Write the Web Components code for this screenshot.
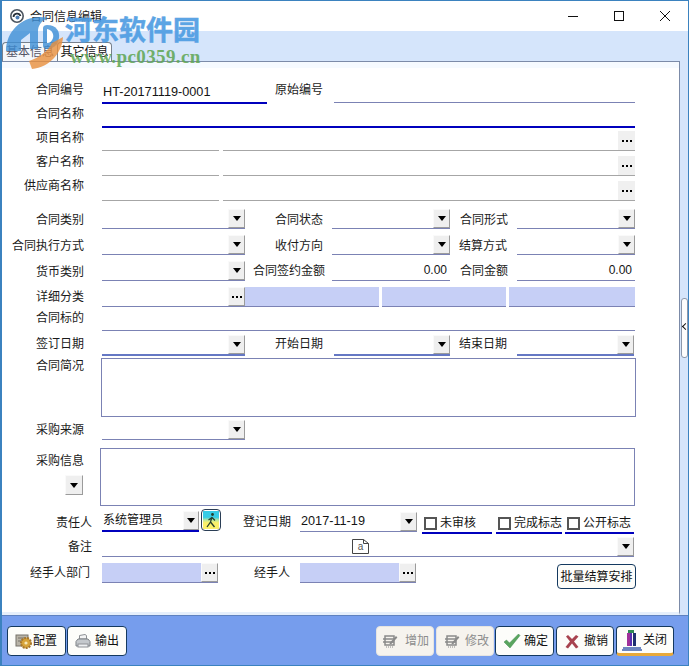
<!DOCTYPE html>
<html lang="zh">
<head>
<meta charset="utf-8">
<title>合同信息编辑</title>
<style>
  html, body { margin: 0; height: 666px; overflow: hidden; background: #fff; }
  body { font: 12px/16px "Liberation Sans", "Noto Sans CJK SC", sans-serif; color: #141414; }
  .stack { display: flex; flex-direction: column; align-items: flex-end; width: 81px; height: 58px; }
</style>
</head>
<body>
<erp-window>
  <erp-titlebar slot="title" heading="合同信息编辑"></erp-titlebar>
  <erp-tabs slot="tabs"></erp-tabs>

  <form-row h="42">
    <f-label w="81" lb="6">合同编号</f-label>
    <f-input ml="17" w="165" kind="navy" value="HT-20171119-0001"></f-input>
    <f-label ml="8" w="49" lb="6">原始编号</f-label>
    <f-input ml="10" w="301" mb="1"></f-input>
  </form-row>
  <form-row h="24">
    <f-label w="81" lb="6">合同名称</f-label>
    <f-input ml="17" w="533" kind="navy"></f-input>
  </form-row>
  <form-row h="23">
    <f-label w="81" lb="5">项目名称</f-label>
    <f-input ml="17" w="117" kind="gray"></f-input>
    <f-input ml="4" w="412" kind="gray"><f-dots slot="btn" flat></f-dots></f-input>
  </form-row>
  <form-row h="25">
    <f-label w="81" lb="6">客户名称</f-label>
    <f-input ml="17" w="117" kind="gray"></f-input>
    <f-input ml="4" w="412" kind="gray"><f-dots slot="btn" flat></f-dots></f-input>
  </form-row>
  <form-row h="25">
    <f-label w="81" lb="7">供应商名称</f-label>
    <f-input ml="17" w="117" kind="gray"></f-input>
    <f-input ml="4" w="412" kind="gray"><f-dots slot="btn" flat></f-dots></f-input>
  </form-row>

  <form-row h="28">
    <f-label w="81" lb="1">合同类别</f-label>
    <f-input ml="17" w="143"><f-drop slot="btn"></f-drop></f-input>
    <f-label ml="30" w="48" lb="1">合同状态</f-label>
    <f-input ml="9" w="118"><f-drop slot="btn"></f-drop></f-input>
    <f-label ml="10" w="48" lb="1">合同形式</f-label>
    <f-input ml="9" w="118"><f-drop slot="btn"></f-drop></f-input>
  </form-row>
  <form-row h="26">
    <f-label w="81" lb="1">合同执行方式</f-label>
    <f-input ml="17" w="143"><f-drop slot="btn"></f-drop></f-input>
    <f-label ml="30" w="49" lb="1">收付方向</f-label>
    <f-input ml="8" w="118"><f-drop slot="btn"></f-drop></f-input>
    <f-label ml="9" w="48" lb="1">结算方式</f-label>
    <f-input ml="10" w="118"><f-drop slot="btn"></f-drop></f-input>
  </form-row>
  <form-row h="26">
    <f-label w="81" lb="1">货币类别</f-label>
    <f-input ml="17" w="143"><f-drop slot="btn"></f-drop></f-input>
    <f-label ml="8" w="71" lb="2">合同签约金额</f-label>
    <f-input ml="8" w="118" value="0.00" align="right"></f-input>
    <f-label ml="10" w="48" lb="2">合同金额</f-label>
    <f-input ml="9" w="118" value="0.00" align="right"></f-input>
  </form-row>
  <form-row h="26">
    <f-label w="81" lb="2">详细分类</f-label>
    <f-input ml="17" w="143"><f-dots slot="btn"></f-dots></f-input>
    <f-input w="134" kind="fill"></f-input>
    <f-input ml="3" w="124" kind="fill"></f-input>
    <f-input ml="3" w="126" kind="fill"></f-input>
  </form-row>
  <form-row h="24">
    <f-label w="81" lb="5">合同标的</f-label>
    <f-input ml="17" w="533"></f-input>
  </form-row>
  <form-row h="25">
    <f-label w="81" lb="4">签订日期</f-label>
    <f-input ml="17" w="143" kind="thick"><f-drop slot="btn"></f-drop></f-input>
    <f-label ml="30" w="48" lb="4">开始日期</f-label>
    <f-input ml="11" w="116" kind="thick"><f-drop slot="btn"></f-drop></f-input>
    <f-label ml="9" w="48" lb="4">结束日期</f-label>
    <f-input ml="10" w="117" kind="thick"><f-drop slot="btn"></f-drop></f-input>
  </form-row>

  <form-row h="61">
    <f-label w="81" lb="43">合同简况</f-label>
    <f-area ml="16" w="535" h="59"></f-area>
  </form-row>
  <form-row h="23">
    <f-label w="81" lb="2">采购来源</f-label>
    <f-input ml="17" w="143"><f-drop slot="btn"></f-drop></f-input>
  </form-row>
  <form-row h="66">
    <div class="stack">
      <f-label style="margin-top:5px;margin-bottom:6px">采购信息</f-label>
      <f-drop h="20" style="margin-right:2px;width:18px"></f-drop>
    </div>
    <f-area ml="15" w="535" h="58"></f-area>
  </form-row>

  <form-row h="28">
    <f-label w="89" lb="3">责任人</f-label>
    <f-input ml="9" w="97" kind="navy" mb="2" cjk value="系统管理员"><f-drop slot="btn" style="width:16px"></f-drop></f-input>
    <f-runner ml="2" mb="3"></f-runner>
    <f-label ml="21" w="50" lb="4">登记日期</f-label>
    <f-input ml="8" w="117" mb="2" value="2017-11-19"><f-drop slot="btn"></f-drop></f-input>
    <f-check ml="5" w="70">未审核</f-check>
    <f-check ml="4" w="66">完成标志</f-check>
    <f-check ml="3" w="69">公开标志</f-check>
  </form-row>
  <form-row h="23">
    <f-label w="89" lb="2">备注</f-label>
    <f-input ml="9" w="532">
      <f-note></f-note>
      <f-drop slot="btn"></f-drop>
    </f-input>
  </form-row>
  <form-row h="33">
    <f-label w="87" lb="9">经手人部门</f-label>
    <f-input ml="11" w="116" kind="fill" mb="7"><f-dots slot="btn"></f-dots></f-input>
    <f-label ml="35" w="38" lb="9">经手人</f-label>
    <f-input ml="9" w="116" kind="fill" mb="7"><f-dots slot="btn"></f-dots></f-input>
    <erp-button ml="141" w="79" h="25" mb="1" plain>批量结算安排</erp-button>
  </form-row>

  <erp-button slot="left" w="59" pl="7">
    <svg slot="icon" width="18" height="18" viewBox="0 0 18 18">
      <rect x="1" y="3" width="12" height="11" fill="#b9b4a8" stroke="#77736a"/>
      <path d="M3 6h8M3 9h5" stroke="#77736a"/>
      <circle cx="11" cy="11" r="5" fill="#d7a43a" stroke="#a8772a" stroke-dasharray="2 1" stroke-width="2"/>
      <circle cx="11" cy="11" r="1.6" fill="#f6e7b8"/>
    </svg>配置</erp-button>
  <erp-button slot="left" w="60" pl="7" gap="4">
    <svg slot="icon" width="16" height="16" viewBox="0 0 16 16">
      <path d="M4.500 6V2.500L10 1.500l1.500 1V6z" fill="#f4f4f4" stroke="#8d9094"/>
      <path d="M1 8.500 3 6h10l2 2.500V13H1z" fill="#c4c8cc" stroke="#7d8185"/>
      <rect x="3" y="11" width="10" height="3" fill="#eef0f2" stroke="#8d9094"/>
    </svg>输出</erp-button>

  <erp-button slot="right" w="58" pl="5" gap="7" disabled>
    <svg slot="icon" width="16" height="14" viewBox="0 0 16 14">
      <path d="M3 2h9v9H3zM1 5h12M1 8h11" fill="none" stroke="#8a8a8a" stroke-width="1.500"/>
      <path d="M8 8.500 14 2l1.400 1.400-6 6.500-2 .4z" fill="#8a8a8a"/>
      <path d="M4 13h7" stroke="#8a8a8a" stroke-dasharray="1 1"/>
    </svg>增加</erp-button>
  <erp-button slot="right" w="58" pl="7" gap="5" disabled>
    <svg slot="icon" width="16" height="14" viewBox="0 0 16 14">
      <path d="M3 2h9v9H3zM1 5h12M1 8h11" fill="none" stroke="#8a8a8a" stroke-width="1.500"/>
      <path d="M8 8.500 14 2l1.400 1.400-6 6.500-2 .4z" fill="#8a8a8a"/>
      <path d="M4 13h7" stroke="#8a8a8a" stroke-dasharray="1 1"/>
    </svg>修改</erp-button>
  <erp-button slot="right" w="59" pl="7" gap="3" style="margin-left:-1px">
    <svg slot="icon" width="18" height="16" viewBox="0 0 18 16">
      <path d="M1 9l2.500-2 3 3L15.500 1 17 2.500 7 15z" fill="#5aa55e" stroke="#3f8a50" stroke-width=".5"/>
    </svg>确定</erp-button>
  <erp-button slot="right" w="58" pl="8" gap="5">
    <svg slot="icon" width="14" height="15" viewBox="0 0 14 15">
      <path d="M1 2.500 3 1l4 4 4-4 2.500 1.500L9 7.500l4.500 5.500-2.500 1.500-4-5-4 5L.5 13 5 7.500z" fill="#a8434f"/>
    </svg>撤销</erp-button>
  <erp-button slot="right" w="58" pl="5" gap="1" primary>
    <svg slot="icon" width="20" height="22" viewBox="0 0 20 22">
      <rect x="6" y="1" width="6" height="3" fill="#2f8a55"/>
      <rect x="5" y="4" width="3" height="13" fill="#a0309a"/>
      <rect x="8" y="4" width="2" height="13" fill="#5a2fb0"/>
      <rect x="11" y="4" width="3" height="13" fill="#1d2f6f"/>
      <path d="M1 19h18M0 21h20" stroke="#6d86bf" stroke-width="2"/>
    </svg>关闭</erp-button>

  <erp-watermark slot="overlay"></erp-watermark>
</erp-window>

<script>
/**
 * The contract editor page. Small form cells read their size from attributes.
 */

const BORDER = '#7b82b4'

/**
 * Base for the cells of a row: ml, mb, w and h become margins and size.
 */
class Cell extends HTMLElement {
  constructor (css, html = '<slot></slot>') {
    super()
    this.attachShadow({ mode: 'open' }).innerHTML = `<style>${css}</style>${html}`
  }

  connectedCallback () {
    const px = (name, prop) => {
      if (this.hasAttribute(name)) this.style[prop] = this.getAttribute(name) + 'px'
    }
    px('ml', 'marginLeft')
    px('mb', 'marginBottom')
    px('lb', 'marginBottom')
    px('w', 'width')
    px('h', 'height')
  }
}

customElements.define('erp-window', class extends HTMLElement {
  constructor () {
    super()
    this.attachShadow({ mode: 'open' }).innerHTML = `
      <style>
        :host { display: flex; flex-direction: column; position: relative; box-sizing: border-box;
          width: 689px; height: 666px; border: 1px solid #3b82bf; border-left-width: 2px; overflow: hidden; }
        .body { flex: 1; display: flex; flex-direction: column; min-height: 0; background: #d5e5fb; }
        .panel { flex: 1; box-sizing: border-box; margin-right: 8px; padding-left: 2px; min-height: 0;
          background: #fff; border-top: 1px solid #7c8ba8; border-right: 1px solid #7c8ba8;
          border-bottom: 3px solid #e6effb; box-shadow: inset 0 6px 0 #f6faff; }
        .grip { position: absolute; right: 0; top: 297px; width: 7px; height: 60px; box-sizing: border-box;
          background: #fdfdfd; border: 1px solid #8b97ab; border-radius: 3px; }
        .grip::after { content: ""; position: absolute; left: 1px; top: 25px; width: 4px; height: 4px;
          border-left: 1.500px solid #111; border-bottom: 1.500px solid #111; transform: rotate(45deg); }
        footer { height: 50px; flex: none; box-sizing: border-box; display: flex; justify-content: space-between;
          padding: 10px 14px 0 5px; background: #769ded; border-top: 1px solid #5f82c0; }
        .group { display: flex; gap: 1px; height: 30px; }
        .group.r { gap: 2px; }
      </style>
      <slot name="title"></slot>
      <div class="body">
        <slot name="tabs"></slot>
        <div class="panel"><slot></slot></div>
        <div class="grip"></div>
      </div>
      <footer>
        <div class="group"><slot name="left"></slot></div>
        <div class="group r"><slot name="right"></slot></div>
      </footer>
      <slot name="overlay"></slot>`
  }
})

customElements.define('erp-titlebar', class extends HTMLElement {
  constructor () {
    super()
    this.attachShadow({ mode: 'open' }).innerHTML = `
      <style>
        :host { display: flex; align-items: center; height: 30px; background: #fff; padding-left: 8px; flex: none; }
        svg { display: block; }
        .name { margin-left: 6px; padding-top: 1px; color: #222; }
        .ctl { margin-left: auto; display: flex; padding-right: 0; }
        .ctl svg { width: 46px; height: 30px; }
      </style>
      <svg width="14" height="14" viewBox="0 0 14 14" fill="none">
        <circle cx="7" cy="7" r="6.200" stroke="#4b5560" stroke-width="1.600"/>
        <path d="M3.500 8a3.600 3.600 0 0 1 7-1" stroke="#26303a" stroke-width="1.800"/>
        <circle cx="7.500" cy="8.500" r="2" fill="#4f7fb5"/>
      </svg>
      <span class="name"></span>
      <div class="ctl">
        <svg viewBox="0 0 46 30" stroke="#111"><path d="M18 15.500h10"/></svg>
        <svg viewBox="0 0 46 30" stroke="#111" fill="none"><rect x="18.500" y="10.500" width="9" height="9"/></svg>
        <svg viewBox="0 0 46 30" stroke="#111"><path d="M18 10l10 10M28 10 18 20"/></svg>
      </div>`
    this.shadowRoot.querySelector('.name').textContent = this.getAttribute('heading')
  }
})

customElements.define('erp-tabs', class extends HTMLElement {
  constructor () {
    super()
    this.attachShadow({ mode: 'open' }).innerHTML = `
      <style>
        :host { display: flex; align-items: flex-end; height: 30px; flex: none; box-sizing: border-box; }
        .tab { box-sizing: border-box; height: 19px; width: 55px; text-align: center; line-height: 18px;
          border: 1px solid #77808c; border-bottom: 0; border-radius: 4px 4px 0 0; }
        .on { background: #f4f7fb; color: #556; border-right: 0; }
        .off { background: #fff; }
      </style>
      <div class="tab on">基本信息</div>
      <div class="tab off">其它信息</div>`
  }
})

customElements.define('form-row', class extends Cell {
  constructor () {
    super(':host { display: flex; align-items: flex-end; }')
  }
})

customElements.define('f-label', class extends Cell {
  constructor () {
    super(`:host { display: block; flex: none; box-sizing: border-box; padding-right: 1px; text-align: right;
      white-space: nowrap; line-height: 16px; color: #1a1a1a; }`)
  }
})

customElements.define('f-input', class extends Cell {
  constructor () {
    super(`
      :host { display: flex; flex: none; box-sizing: border-box; height: 20px;
        border-bottom: 1px solid ${BORDER}; background: #fff; }
      :host([kind="navy"]) { border-bottom: 2px solid #0000bd; height: 21px; }
      :host([kind="gray"]) { border-bottom-color: #a6a6a6; }
      :host([kind="thick"]) { border-bottom: 2px solid #6578c4; height: 21px; }
      :host([kind="fill"]) { background: #c6cff6; }
      .text { flex: 1; min-width: 0; align-self: flex-end; padding: 0 3px 2px 1px; white-space: nowrap; font-size: 12.700px; }
      :host([cjk]) .text { font-size: 12px; }
      :host([align="right"]) .text { text-align: right; font-size: 12px; }
      .free { flex: 1; min-width: 0; display: flex; align-items: center; }
    `, '<span class="text"></span><slot name="btn"></slot>')
  }

  connectedCallback () {
    super.connectedCallback()
    const text = this.shadowRoot.querySelector('.text')
    text.textContent = this.getAttribute('value') || ''
    // Anything without a slot name (the note icon) goes in front of the button.
    if (this.querySelector(':scope > :not([slot])')) {
      const box = document.createElement('div')
      box.className = 'free'
      box.appendChild(document.createElement('slot'))
      text.replaceWith(box)
    }
  }
})

const BEVEL = `
  :host { display: flex; flex: none; align-items: center; justify-content: center; box-sizing: border-box;
    width: 17px; height: 19px; background: #efefef; border: 1px solid;
    border-color: #fafafa #9b9b9b #9b9b9b #fafafa; }
`

customElements.define('f-drop', class extends Cell {
  constructor () {
    super(BEVEL + `
      i { display: block; width: 0; height: 0; border: 4px solid transparent; border-top: 5px solid #000; border-bottom: 0; }
    `, '<i></i>')
  }
})

customElements.define('f-dots', class extends Cell {
  constructor () {
    super(BEVEL + `
      :host([flat]) { background: #f0f0f0; border-color: #f0f0f0; }
      i { display: block; width: 2px; height: 2px; background: #000; box-shadow: -4px 0 #000, 4px 0 #000; }
    `, '<i></i>')
  }
})

customElements.define('f-area', class extends Cell {
  constructor () {
    super(`:host { display: block; flex: none; box-sizing: border-box; border: 1px solid ${BORDER}; background: #fff; }`)
  }
})

customElements.define('f-check', class extends Cell {
  constructor () {
    super(`
      :host { display: flex; flex: none; align-items: center; box-sizing: border-box; height: 19px;
        padding: 0 0 1px 2px; border-bottom: 2px solid #0000bd; white-space: nowrap; }
      i { display: block; box-sizing: border-box; width: 13px; height: 13px; margin-right: 3px;
        border: 2px solid #555; background: #fff; }
    `, '<i></i><slot></slot>')
  }
})

customElements.define('f-runner', class extends Cell {
  constructor () {
    super(`
      :host { display: block; flex: none; box-sizing: border-box; width: 20px; height: 22px; padding: 1px;
        border: 1px solid #2a3d55; border-radius: 4px; background: #fff; }
      svg { display: block; background: linear-gradient(#36cbe6 0 35%, #b8e8a0 50%, #fbf06a 65% 100%); }
    `, `<svg width="16" height="18" viewBox="0 0 16 18" fill="none" stroke="#26402e" stroke-width="1.300">
      <circle cx="9.500" cy="3.500" r="1.400" fill="#26402e" stroke="none"/>
      <path d="M9 6 7.500 11 4 16M7.500 11l4 5M9 6.500 5.500 9M9 6.500l3 3"/>
    </svg>`)
  }
})

customElements.define('f-note', class extends Cell {
  constructor () {
    super(`
      :host { display: flex; position: relative; align-items: center; justify-content: center; box-sizing: border-box;
        width: 17px; height: 15px; margin-left: 250px; font-size: 10px; line-height: 12px; color: #555; }
      svg { position: absolute; left: 0; top: 0; }
    `, `<svg width="17" height="15" viewBox="0 0 17 15" fill="none" stroke="#444">
      <path d="M.5.500h11l5 4v10H.5zM11.500.500v4h5"/>
    </svg><span>a</span>`)
  }
})

customElements.define('erp-button', class extends Cell {
  constructor () {
    super(`
      :host { display: flex; flex: none; align-items: center; box-sizing: border-box; height: 30px;
        padding-left: 8px; border: 1px solid #14395f; border-radius: 4px; background: #fdfdfa;
        white-space: nowrap; color: #111; }
      :host([disabled]) { border-color: #e6e4e0; background: #f6f3ee; color: #8d8d8d; }
      :host([plain]) { justify-content: center; padding-left: 0; }
      :host([primary]) { border-bottom: 3px solid #e8a93a; }
      .ic { display: flex; flex: none; }
    `, '<span class="ic"><slot name="icon"></slot></span><slot></slot>')
  }

  connectedCallback () {
    super.connectedCallback()
    if (this.hasAttribute('gap')) {
      this.shadowRoot.querySelector('.ic').style.marginRight = this.getAttribute('gap') + 'px'
    }
    if (this.hasAttribute('pl')) this.style.paddingLeft = this.getAttribute('pl') + 'px'
  }
})

customElements.define('erp-watermark', class extends HTMLElement {
  constructor () {
    super()
    this.attachShadow({ mode: 'open' }).innerHTML = `
      <style>
        :host { position: absolute; left: 0; top: 0; width: 210px; height: 72px; pointer-events: none; }
        svg { position: absolute; left: 0; top: 8px; }
        .cn { position: absolute; left: 63px; top: 9px; font: bold 27px/38px "Noto Sans CJK SC", sans-serif;
          -webkit-text-stroke: .5px #4b9be2; color: #4b9be2; opacity: .9; white-space: nowrap; }
        .url { position: absolute; left: 68px; top: 47px; font: bold 19px/18px "Liberation Serif", serif;
          letter-spacing: .4px; color: #5ea552; opacity: .85; white-space: nowrap; }
      </style>
      <svg width="64" height="62" viewBox="0 0 64 62">
        <path d="M4 42C4 20 24 4 46 9c-7 3-10 8-10 13v18h-8V24l-9 7v11H4z" fill="#3d8fd6" opacity=".8"/>
        <path d="M45 16c9 0 13 6 12 13-1 7-6 11-12 11-2 0-4-1-4-3V19c0-2 2-3 4-3z" fill="#3d8fd6" opacity=".8"/>
        <path d="M45 20c5 1 7 5 6 9-1 3-3 5-6 5z" fill="#fff"/>
        <path d="M61 28C60 44 48 58 30 60l-3-8c11-4 19-10 23-18z" fill="#e88f3c" opacity=".8"/>
      </svg>
      <div class="cn">河东软件园</div>
      <div class="url">www.pc0359.cn</div>`
  }
})
</script>
</body>
</html>
